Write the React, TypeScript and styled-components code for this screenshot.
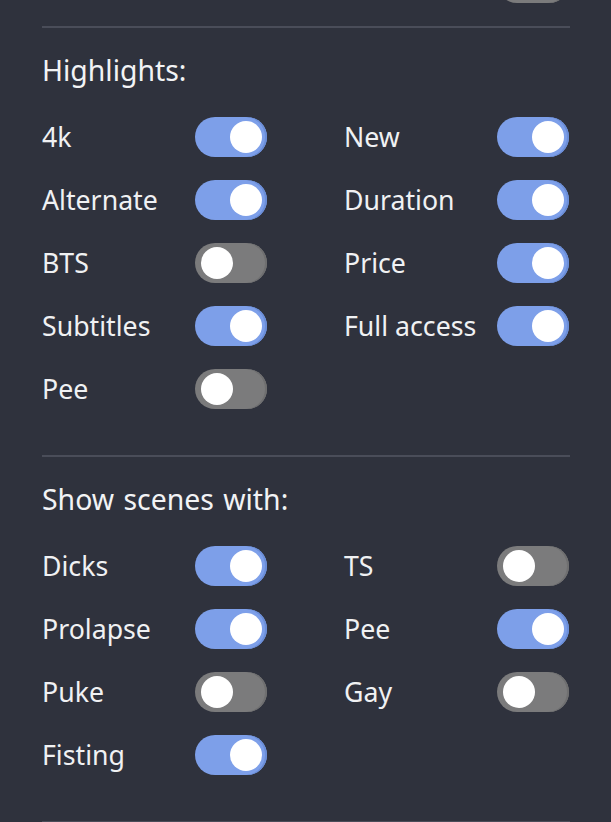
import * as React from 'react';
import styled, { createGlobalStyle } from 'styled-components';

const GlobalStyle = createGlobalStyle`
  html, body {
    margin: 0;
    padding: 0;
    background: #2f323d;
    overflow: hidden;
  }
  body {
    font-family: 'Noto Sans', 'Open Sans', sans-serif;
  }
`;

const Panel = styled.div`
  width: 611px;
  height: 822px;
  box-sizing: border-box;
  padding: 0 41px 0 42px;
  background: #2f323d;
  color: #f2f3f5;
  overflow: hidden;
`;

const PrevTail = styled.div`
  display: flex;
  justify-content: flex-end;
  margin-top: -37px;
  padding-right: 1px;
  margin-bottom: 23px;
`;

const Divider = styled.hr`
  border: 0;
  height: 2px;
  margin: 0;
  background: #4a4d59;
`;

const Section = styled.section`
  padding-bottom: 46px;
`;

const Heading = styled.h3`
  margin: 22px 0 27px;
  font-size: 28.4px;
  line-height: 40px;
  font-weight: 400;
  word-spacing: 2px;
  color: #f2f3f5;
`;

const OptionGrid = styled.div`
  display: grid;
  grid-template-columns: 226px 226px;
  column-gap: 76px;
  row-gap: 23px;
`;

const OptionRow = styled.label`
  display: flex;
  align-items: center;
  height: 40px;
  cursor: pointer;
`;

const OptionName = styled.span`
  width: 153px;
  font-size: 26.7px;
  line-height: 40px;
  white-space: nowrap;
  color: #f0f1f3;
`;

const Track = styled.span<{ $on: boolean }>`
  position: relative;
  display: inline-block;
  width: 72px;
  height: 40px;
  border-radius: 20px;
  box-sizing: border-box;
  background: ${({ $on }) => ($on ? '#7d9fe9' : '#7b7b7c')};
  box-shadow: inset -2px 0 0 ${({ $on }) => ($on ? '#6b8ed8' : '#6f6f70')};
`;

const Knob = styled.span<{ $on: boolean }>`
  position: absolute;
  top: 4px;
  left: ${({ $on }) => ($on ? '35px' : '6px')};
  width: 32px;
  height: 32px;
  border-radius: 50%;
  background: #ffffff;
`;

type ToggleProps = { on: boolean };

const Toggle: React.FC<ToggleProps> = ({ on }) => (
  <Track $on={on}>
    <Knob $on={on} />
  </Track>
);

type Option = { name: string; on: boolean };

const highlights: Option[] = [
  { name: '4k', on: true },
  { name: 'New', on: true },
  { name: 'Alternate', on: true },
  { name: 'Duration', on: true },
  { name: 'BTS', on: false },
  { name: 'Price', on: true },
  { name: 'Subtitles', on: true },
  { name: 'Full access', on: true },
  { name: 'Pee', on: false },
];

const scenes: Option[] = [
  { name: 'Dicks', on: true },
  { name: 'TS', on: false },
  { name: 'Prolapse', on: true },
  { name: 'Pee', on: true },
  { name: 'Puke', on: false },
  { name: 'Gay', on: false },
  { name: 'Fisting', on: true },
];

const OptionSection: React.FC<{ title: string; options: Option[] }> = ({ title, options }) => (
  <Section>
    <Divider />
    <Heading>{title}</Heading>
    <OptionGrid>
      {options.map((o, i) => (
        <OptionRow key={i}>
          <OptionName>{o.name}</OptionName>
          <Toggle on={o.on} />
        </OptionRow>
      ))}
    </OptionGrid>
  </Section>
);

export default function App() {
  return (
    <>
      <GlobalStyle />
      <Panel>
        <PrevTail>
          <Toggle on={false} />
        </PrevTail>
        <OptionSection title="Highlights:" options={highlights} />
        <OptionSection title="Show scenes with:" options={scenes} />
        <Divider />
      </Panel>
    </>
  );
}
